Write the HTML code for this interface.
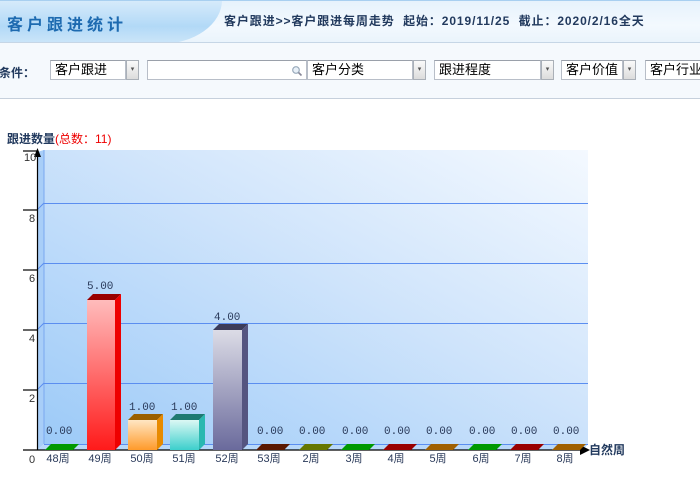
<!DOCTYPE html>
<html><head><meta charset="utf-8">
<style>
*{margin:0;padding:0;box-sizing:border-box}
body{width:700px;height:483px;overflow:hidden;background:#fff;font-family:"Liberation Sans","Noto Sans CJK SC","WenQuanYi Zen Hei",sans-serif;position:relative}
.hdr{position:absolute;left:0;top:0;width:700px;height:43px;background:linear-gradient(#e6f2fc,#f3f9fe 60%,#eaf4fc);border-top:1px solid #a8cff0;border-bottom:1px solid #c6d6e6;overflow:hidden}
.hdr .l{position:absolute;left:-20px;top:-1px;width:242px;height:44px;background:linear-gradient(#d7ebfb,#b2d9f7 60%,#cde6f9);border-radius:0 0 70px 0/0 0 50px 0}
.ttl{position:absolute;left:7px;top:10px;font-size:16px;font-weight:bold;color:#1d6ab0;letter-spacing:4px}
.crumb{position:absolute;left:224px;top:11px;font-size:12px;font-weight:bold;color:#223a5e;white-space:nowrap;letter-spacing:0.9px}
.bar{position:absolute;left:0;top:43px;width:700px;height:56px;background:#f5f9fd;border-bottom:1px solid #c6d0dc}
.lab{position:absolute;left:0;top:21px;font-size:12px;font-weight:bold;color:#223a5e;white-space:nowrap;margin-left:-5px}
.sel{position:absolute;top:17px;height:20px;background:#fff;border:1px solid #b8bec8;border-top-color:#9aa0aa;font-size:13px;color:#000;line-height:18px;padding-left:4px;white-space:nowrap;overflow:hidden}
.btn{position:absolute;top:17px;width:13px;height:20px;background:linear-gradient(#fafafa,#dcdcdc);border:1px solid #aab0b8;font-size:7px;color:#555;text-align:center;line-height:18px}
</style></head><body>
<div class="hdr"><div class="l"></div>
<div class="ttl">客户跟进统计</div>
<div class="crumb">客户跟进&gt;&gt;客户跟进每周走势&nbsp; 起始：2019/11/25&nbsp; 截止：2020/2/16全天</div>
</div>
<div class="bar">
<div class="lab">-条件：</div>
<div class="sel" style="left:50px;width:76px">客户跟进</div><div class="btn" style="left:126px">▾</div>
<div class="sel" style="left:147px;width:160px"></div>
<svg style="position:absolute;left:291px;top:22px" width="12" height="12"><circle cx="5" cy="5" r="3.3" fill="#e8f0f8" stroke="#9ab" stroke-width="1.2"/><line x1="7.5" y1="7.5" x2="10.5" y2="10.5" stroke="#889" stroke-width="1.6"/></svg>
<div class="sel" style="left:307px;width:106px">客户分类</div><div class="btn" style="left:413px">▾</div>
<div class="sel" style="left:434px;width:107px">跟进程度</div><div class="btn" style="left:541px">▾</div>
<div class="sel" style="left:561px;width:62px">客户价值</div><div class="btn" style="left:623px">▾</div>
<div class="sel" style="left:645px;width:60px">客户行业</div>
</div>
<div style="position:absolute;left:7px;top:130px;font-size:12px;white-space:nowrap"><b style="color:#223a5e">跟进数量</b><span style="color:#e00">(总数：11)</span></div>
<svg style="position:absolute;left:0;top:0" width="700" height="483" font-family="Liberation Sans,Noto Sans CJK SC,sans-serif">
<defs>
<linearGradient id="bg" x1="0" y1="1" x2="1" y2="0"><stop offset="0" stop-color="#9ccaf8"/><stop offset="0.55" stop-color="#cfe4fb"/><stop offset="1" stop-color="#f4f9ff"/></linearGradient>
<linearGradient id="g1" x1="0" y1="0" x2="0" y2="1"><stop offset="0" stop-color="#ffbcbc"/><stop offset="1" stop-color="#ff1a1a"/></linearGradient>
<linearGradient id="g2" x1="0" y1="0" x2="0" y2="1"><stop offset="0" stop-color="#ffe6c4"/><stop offset="1" stop-color="#ff9a2a"/></linearGradient>
<linearGradient id="g3" x1="0" y1="0" x2="0" y2="1"><stop offset="0" stop-color="#dcf8f4"/><stop offset="1" stop-color="#3ccfcc"/></linearGradient>
<linearGradient id="g4" x1="0" y1="0" x2="0" y2="1"><stop offset="0" stop-color="#dcdce6"/><stop offset="1" stop-color="#6a6a9c"/></linearGradient>
</defs>
<rect x="44" y="150" width="544" height="294" fill="url(#bg)"/>
<polygon points="37,152 44,150 44,444 37,450" fill="#a8cef8"/>
<polygon points="37,450 44,444 588,444 583,450" fill="#b8d8fa"/>
<line x1="44" y1="150" x2="44" y2="444" stroke="#7aa8f0"/>
<g stroke="#5b8ef0" stroke-width="1">
<line x1="44" y1="203.5" x2="588" y2="203.5"/><line x1="44" y1="263.5" x2="588" y2="263.5"/><line x1="44" y1="323.5" x2="588" y2="323.5"/><line x1="44" y1="383.5" x2="588" y2="383.5"/><line x1="44" y1="444.5" x2="588" y2="444.5"/>
<line x1="37" y1="210" x2="44" y2="203"/><line x1="37" y1="270" x2="44" y2="263"/><line x1="37" y1="330" x2="44" y2="323"/><line x1="37" y1="390" x2="44" y2="383"/>
</g>
<g stroke="#000" stroke-width="1.2">
<line x1="37.5" y1="152" x2="37.5" y2="450"/>
<line x1="23" y1="210" x2="37" y2="210"/><line x1="23" y1="270" x2="37" y2="270"/><line x1="23" y1="330" x2="37" y2="330"/><line x1="23" y1="390" x2="37" y2="390"/><line x1="23" y1="450" x2="582" y2="450"/><line x1="23" y1="151" x2="37" y2="151"/>
</g>
<polygon points="37.5,148 34,157 41,157" fill="#000"/>
<polygon points="590,450 580,445 580,455" fill="#000"/>
<g font-size="11" fill="#333">
<text x="24" y="161">10</text><text x="29" y="222">8</text><text x="29" y="282">6</text><text x="29" y="342">4</text><text x="29" y="402">2</text><text x="29" y="463">0</text>
</g>
<text x="589" y="454" font-size="12" font-weight="bold" fill="#223a5e">自然周</text>
<g>
<polygon points="45,450 73,450 79,444 51,444" fill="#009900"/>
<polygon points="256,450 284,450 290,444 262,444" fill="#5a1800"/>
<polygon points="299,450 327,450 333,444 305,444" fill="#667700"/>
<polygon points="341,450 369,450 375,444 347,444" fill="#009900"/>
<polygon points="383,450 411,450 417,444 389,444" fill="#990000"/>
<polygon points="425,450 453,450 459,444 431,444" fill="#a06000"/>
<polygon points="468,450 496,450 502,444 474,444" fill="#009900"/>
<polygon points="510,450 538,450 544,444 516,444" fill="#990000"/>
<polygon points="552,450 580,450 586,444 558,444" fill="#a06000"/>
</g>
<rect x="87" y="300" width="28" height="150" fill="url(#g1)"/><polygon points="87,300 93,294 121,294 115,300" fill="#990000"/><polygon points="115,300 121,294 121,444 115,450" fill="#ee0000"/>
<rect x="128" y="420" width="29" height="30" fill="url(#g2)"/><polygon points="128,420 134,414 163,414 157,420" fill="#9a6000"/><polygon points="157,420 163,414 163,444 157,450" fill="#e88a00"/>
<rect x="170" y="420" width="29" height="30" fill="url(#g3)"/><polygon points="170,420 176,414 205,414 199,420" fill="#1e7a72"/><polygon points="199,420 205,414 205,444 199,450" fill="#2ab8b0"/>
<rect x="213" y="330" width="29" height="120" fill="url(#g4)"/><polygon points="213,330 219,324 248,324 242,330" fill="#3c3c5a"/><polygon points="242,330 248,324 248,444 242,450" fill="#555580"/>
<g font-size="11" fill="#2a3a5a" font-family="Liberation Mono,monospace">
<text x="46" y="434">0.00</text><text x="87" y="289">5.00</text><text x="129" y="410">1.00</text><text x="171" y="410">1.00</text><text x="214" y="320">4.00</text>
<text x="257" y="434">0.00</text><text x="299" y="434">0.00</text><text x="342" y="434">0.00</text><text x="384" y="434">0.00</text><text x="426" y="434">0.00</text><text x="469" y="434">0.00</text><text x="511" y="434">0.00</text><text x="553" y="434">0.00</text>
</g>
<g font-size="11" fill="#2a3a5a" text-anchor="middle">
<text x="58" y="462">48周</text><text x="100" y="462">49周</text><text x="142" y="462">50周</text><text x="184" y="462">51周</text><text x="227" y="462">52周</text><text x="269" y="462">53周</text><text x="311" y="462">2周</text><text x="354" y="462">3周</text><text x="396" y="462">4周</text><text x="438" y="462">5周</text><text x="481" y="462">6周</text><text x="523" y="462">7周</text><text x="565" y="462">8周</text>
</g>
</svg>
</body></html>
